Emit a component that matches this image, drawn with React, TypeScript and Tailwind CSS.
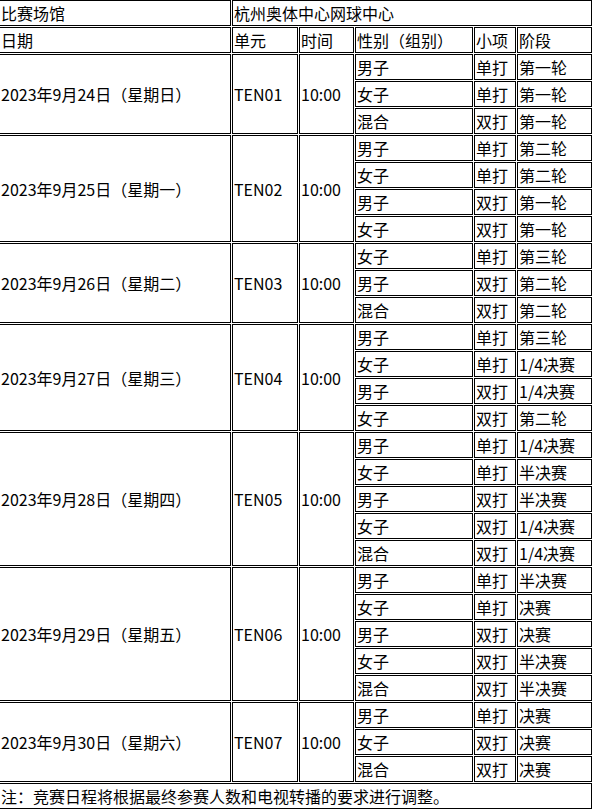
const days = [
  {
    date: '2023年9月24日（星期日）',
    unit: 'TEN01',
    rows: [
      ['男子', '单打', '第一轮'],
      ['女子', '单打', '第一轮'],
      ['混合', '双打', '第一轮'],
    ],
  },
  {
    date: '2023年9月25日（星期一）',
    unit: 'TEN02',
    rows: [
      ['男子', '单打', '第二轮'],
      ['女子', '单打', '第二轮'],
      ['男子', '双打', '第一轮'],
      ['女子', '双打', '第一轮'],
    ],
  },
  {
    date: '2023年9月26日（星期二）',
    unit: 'TEN03',
    rows: [
      ['女子', '单打', '第三轮'],
      ['男子', '双打', '第二轮'],
      ['混合', '双打', '第二轮'],
    ],
  },
  {
    date: '2023年9月27日（星期三）',
    unit: 'TEN04',
    rows: [
      ['男子', '单打', '第三轮'],
      ['女子', '单打', '1/4决赛'],
      ['男子', '双打', '1/4决赛'],
      ['女子', '双打', '第二轮'],
    ],
  },
  {
    date: '2023年9月28日（星期四）',
    unit: 'TEN05',
    rows: [
      ['男子', '单打', '1/4决赛'],
      ['女子', '单打', '半决赛'],
      ['男子', '双打', '半决赛'],
      ['女子', '双打', '1/4决赛'],
      ['混合', '双打', '1/4决赛'],
    ],
  },
  {
    date: '2023年9月29日（星期五）',
    unit: 'TEN06',
    rows: [
      ['男子', '单打', '半决赛'],
      ['女子', '单打', '决赛'],
      ['男子', '双打', '决赛'],
      ['女子', '双打', '半决赛'],
      ['混合', '双打', '半决赛'],
    ],
  },
  {
    date: '2023年9月30日（星期六）',
    unit: 'TEN07',
    rows: [
      ['男子', '单打', '决赛'],
      ['女子', '双打', '决赛'],
      ['混合', '双打', '决赛'],
    ],
  },
];

const cell = 'border border-black p-px align-middle whitespace-nowrap overflow-hidden';

export default function App() {
  return (
    <div className="w-[594px] h-[811px] overflow-hidden bg-white text-black">
      <table
        className="-ml-[2px] -mt-px w-[595px] table-fixed border-separate border-spacing-px text-[16px] leading-[22px] text-left"
        style={{ fontFamily: '"Noto Sans CJK SC", "Noto Sans", sans-serif' }}
      >
        <colgroup>
          <col className="w-[232px]" />
          <col className="w-[66px]" />
          <col className="w-[55px]" />
          <col className="w-[118px]" />
          <col className="w-[42px]" />
          <col className="w-[75px]" />
        </colgroup>
        <tbody>
          <tr>
            <td className={cell}>比赛场馆</td>
            <td className={cell} colSpan={5}>杭州奥体中心网球中心</td>
          </tr>
          <tr>
            <td className={cell}>日期</td>
            <td className={cell}>单元</td>
            <td className={cell}>时间</td>
            <td className={cell}>性别（组别）</td>
            <td className={cell}>小项</td>
            <td className={cell}>阶段</td>
          </tr>
          {days.map((day) =>
            day.rows.map((r, i) => (
              <tr key={day.unit + i}>
                {i === 0 && (
                  <>
                    <td className={cell} rowSpan={day.rows.length}>{day.date}</td>
                    <td className={cell} rowSpan={day.rows.length}>{day.unit}</td>
                    <td className={cell} rowSpan={day.rows.length}>10:00</td>
                  </>
                )}
                <td className={cell}>{r[0]}</td>
                <td className={cell}>{r[1]}</td>
                <td className={cell}>{r[2]}</td>
              </tr>
            ))
          )}
          <tr>
            <td className={cell} colSpan={6}>注：竞赛日程将根据最终参赛人数和电视转播的要求进行调整。</td>
          </tr>
        </tbody>
      </table>
    </div>
  );
}
